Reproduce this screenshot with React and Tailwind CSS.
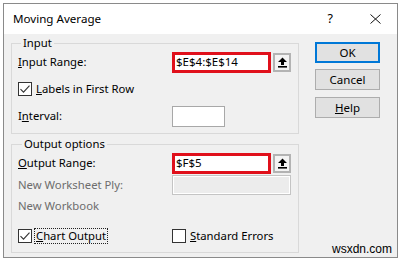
import React from "react";

const ui = { fontFamily: '"Noto Sans", "Open Sans", sans-serif' };

function UpArrow() {
  return (
    <svg width="11" height="11" viewBox="0 0 11 11">
      <path d="M5.5 0.5 L10 5 L7 5 L7 8 L4 8 L4 5 L1 5 Z" fill="#000" />
      <rect x="1" y="9" width="9" height="1.6" fill="#000" />
    </svg>
  );
}

function CheckBox({ checked }) {
  return (
    <div className="w-[14px] h-[14px] border border-[#333] bg-white flex items-center justify-center shrink-0">
      {checked && (
        <svg width="12" height="12" viewBox="0 0 12 12">
          <path d="M1.5 6.2 L4.5 9.2 L10.5 2.6" fill="none" stroke="#333" strokeWidth="1.1" />
        </svg>
      )}
    </div>
  );
}

function RangeField({ value }) {
  return (
    <div className="flex items-center">
      <div className="w-[99px] h-[21px] border-[3px] border-[#e0101b] bg-white flex items-center pl-[1px] text-[11.5px] leading-none text-black">
        {value}
      </div>
      <div className="ml-[2px] w-[18px] h-[19px] border-2 border-[#b3b3b3] bg-[#f3f3f3] flex items-center justify-center">
        <UpArrow />
      </div>
    </div>
  );
}

function Btn({ children, primary }) {
  return (
    <div
      className={
        "w-[65px] h-[21px] flex items-center justify-center bg-[#e1e1e1] text-[11.5px] text-black " +
        (primary ? "border-2 border-[#0078d7]" : "border border-[#adadad]")
      }
    >
      {children}
    </div>
  );
}

export default function App() {
  return (
    <div className="w-[403px] h-[261px] bg-white pt-[3px] pl-[3px]" style={ui}>
      <div className="relative w-[395px] h-[255px] border border-[#8a8a8a] flex flex-col">
        {/* title bar */}
        <div className="h-[30px] bg-white flex items-center shrink-0 text-[11.6px] text-black">
          <span className="ml-[9px]">Moving Average</span>
          <span className="ml-auto mr-[37px] text-[12.5px]">?</span>
          <svg className="mr-[16px]" width="11" height="10" viewBox="0 0 11 10">
            <path d="M0.5 0.5 L10.5 9.5 M10.5 0.5 L0.5 9.5" stroke="#111" strokeWidth="1" />
          </svg>
        </div>

        {/* body */}
        <div className="flex-1 bg-[#f0f0f0] flex text-[11.3px] text-black">
          <div className="ml-[7px] w-[288px] flex flex-col">
            <fieldset className="mt-[1px] border border-[#d9d9d9] pl-[6px] pr-[7px] pb-[7px] h-[99px]">
              <legend className="ml-[3px] px-[2px] leading-[16px]">Input</legend>
              <div className="h-[22px] flex items-center">
                <span className="w-[154px]">
                  <u>I</u>nput Range:
                </span>
                <RangeField value="$E$4:$E$14" />
              </div>
              <div className="mt-[9px] h-[14px] flex items-center gap-[4px]">
                <CheckBox checked />
                <span>
                  <u>L</u>abels in First Row
                </span>
              </div>
              <div className="mt-[10px] h-[21px] flex items-center">
                <span className="w-[154px]">
                  I<u>n</u>terval:
                </span>
                <div className="w-[53px] h-[21px] border border-[#a8a8a8] bg-white" />
              </div>
            </fieldset>

            <fieldset className="mt-[2px] border border-[#d9d9d9] pl-[6px] pr-[7px] h-[117px]">
              <legend className="ml-[4px] px-[2px] leading-[16px]">Output options</legend>
              <div className="h-[22px] flex items-center">
                <span className="w-[154px]">
                  <u>O</u>utput Range:
                </span>
                <RangeField value="$F$5" />
              </div>
              <div className="mt-[1px] h-[20px] flex items-center text-[#6d6d6d]">
                <span className="w-[154px]">New Worksheet Ply:</span>
                <div className="w-[119px] h-[20px] border border-[#c4c4c4] bg-white p-[1px]">
                  <div className="w-full h-full bg-[#ececec]" />
                </div>
              </div>
              <div className="mt-[2px] h-[18px] flex items-center text-[#6d6d6d]">New Workbook</div>
              <div className="mt-[14px] h-[14px] flex items-center">
                <div className="w-[154px] flex items-center gap-[2px]">
                  <CheckBox checked />
                  <span className="border border-dotted border-[#222] px-[1px] leading-[14px]">
                    <u>C</u>hart Output
                  </span>
                </div>
                <div className="flex items-center gap-[4px]">
                  <CheckBox />
                  <span>
                    <u>S</u>tandard Errors
                  </span>
                </div>
              </div>
            </fieldset>
          </div>

          <div className="ml-[16px] mt-[8px] flex flex-col gap-[6px]">
            <Btn primary>OK</Btn>
            <Btn>Cancel</Btn>
            <div className="mt-[1px]">
              <Btn>
                <span>
                  <u>H</u>elp
                </span>
              </Btn>
            </div>
          </div>
        </div>

        <span
          className="absolute right-[5px] bottom-[1px] text-[12px] leading-[14px] text-black"
          style={{ fontFamily: '"Liberation Sans", Arial, sans-serif' }}
        >
          wsxdn.com
        </span>
      </div>
    </div>
  );
}
